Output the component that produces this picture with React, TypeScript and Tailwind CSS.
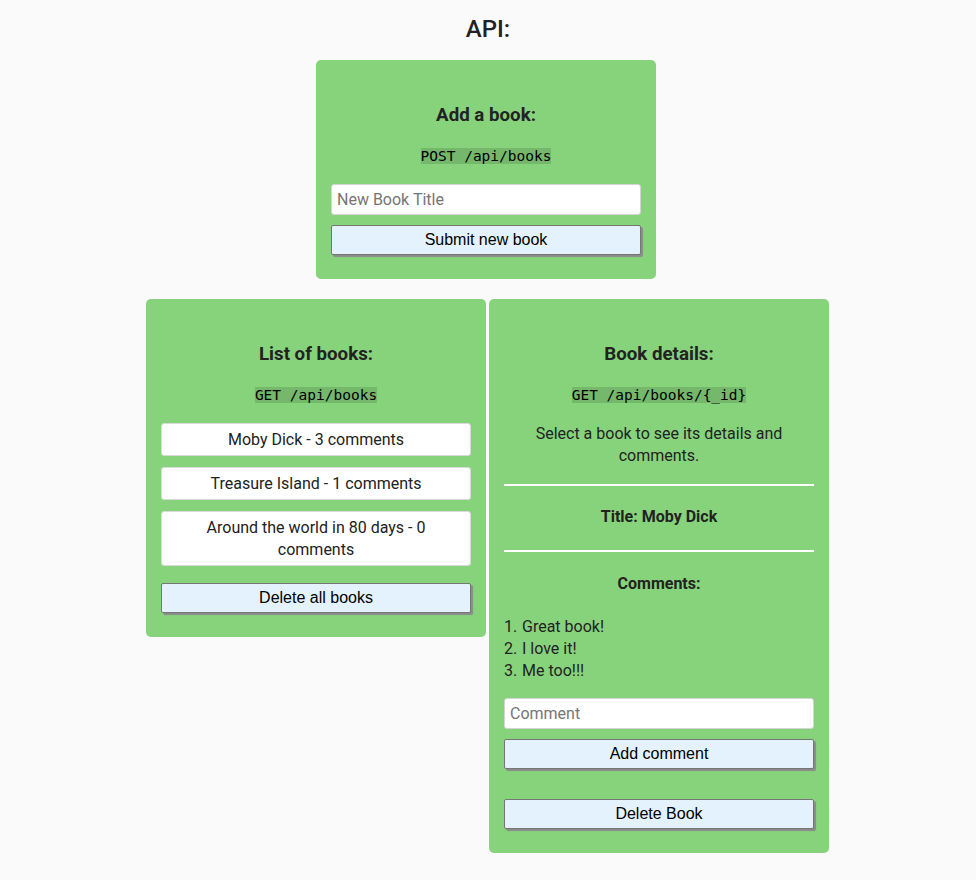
import React from 'react';

const books = [
  { title: 'Moby Dick', count: 3 },
  { title: 'Treasure Island', count: 1 },
  { title: 'Around the world in 80 days', count: 0 },
];

const comments = ['Great book!', 'I love it!', 'Me too!!!'];

function Code({ children }: { children: React.ReactNode }) {
  return (
    <div className="text-center leading-[19px]">
      <code className="bg-[#75b86c] font-['DejaVu_Sans_Mono',monospace] text-[14.5px] leading-[19px] text-black">
        {children}
      </code>
    </div>
  );
}

function Heading({ children }: { children: React.ReactNode }) {
  return <h3 className="mt-[29px] text-center text-[18.72px] font-bold leading-[22px] text-[#222]">{children}</h3>;
}

function Button({ children, className = '' }: { children: React.ReactNode; className?: string }) {
  return (
    <button
      className={`block h-[30px] w-full rounded-[2px] border border-[#767676] bg-[#e3f2fd] font-['Liberation_Sans',Arial,sans-serif] text-[16px] text-black shadow-[2px_2px_1px_#8a8a8a] ${className}`}
    >
      {children}
    </button>
  );
}

function Input({ placeholder }: { placeholder: string }) {
  return (
    <input
      placeholder={placeholder}
      className="block h-[31px] w-full rounded-[3px] border border-[#d4d4d4] bg-white px-[5px] font-['Roboto',sans-serif] text-[16px] text-[#222] outline-none placeholder:text-[#757575]"
    />
  );
}

export default function App() {
  return (
    <div className="min-h-[880px] bg-[#fafafa] pb-6 font-['Roboto',sans-serif] text-[16px] text-[#222]">
      <h2 className="pt-[15px] text-center text-[24px] font-medium leading-[28px] text-[#222]">API:</h2>
      <div className="mx-auto mt-[17px] w-[684px]">
        <div className="ml-[170px] w-[340px] rounded-[5px] bg-[#87d37c] px-[15px] pt-[15px] pb-[24px]">
          <Heading>Add a book:</Heading>
          <div className="mt-[20px]">
            <Code>POST /api/books</Code>
          </div>
          <div className="mt-[18px]">
            <Input placeholder="New Book Title" />
          </div>
          <Button className="mt-[10px]">Submit new book</Button>
        </div>

        <div className="mt-[20px] flex items-start gap-[3px]">
          <div className="w-[340px] rounded-[5px] bg-[#87d37c] px-[15px] pt-[15px] pb-[24px]">
            <Heading>List of books:</Heading>
            <div className="mt-[20px]">
              <Code>GET /api/books</Code>
            </div>
            <ul className="mt-[18px] flex flex-col gap-[11px]">
              {books.map((b) => (
                <li
                  key={b.title}
                  className="rounded-[3px] border border-[#d9d9d9] bg-white px-[40px] pt-[5px] pb-[4px] text-center leading-[22px] text-[#222]"
                >
                  {b.title} - {b.count} comments
                </li>
              ))}
            </ul>
            <Button className="mt-[17px]">Delete all books</Button>
          </div>

          <div className="w-[340px] rounded-[5px] bg-[#87d37c] px-[15px] pt-[15px] pb-[24px]">
            <Heading>Book details:</Heading>
            <div className="mt-[20px]">
              <Code>GET /api/books/{'{_id}'}</Code>
            </div>
            <p className="mt-[18px] px-[14px] text-center leading-[22px] text-[#222]">
              Select a book to see its details and comments.
            </p>
            <div className="mt-[17px] h-[2px] bg-white" />
            <h4 className="mt-[21px] text-center font-bold leading-[19px] text-[#222]">Title: Moby Dick</h4>
            <div className="mt-[24px] h-[2px] bg-white" />
            <h4 className="mt-[21.5px] text-center font-bold leading-[19px] text-[#222]">Comments:</h4>
            <ol className="mt-[23px]">
              {comments.map((c, i) => (
                <li key={c} className="flex leading-[22px] text-[#222]">
                  <span className="w-[18px]">{i + 1}.</span>
                  <span>{c}</span>
                </li>
              ))}
            </ol>
            <div className="mt-[16px]">
              <Input placeholder="Comment" />
            </div>
            <Button className="mt-[10px]">Add comment</Button>
            <Button className="mt-[30px]">Delete Book</Button>
          </div>
        </div>
      </div>
    </div>
  );
}
